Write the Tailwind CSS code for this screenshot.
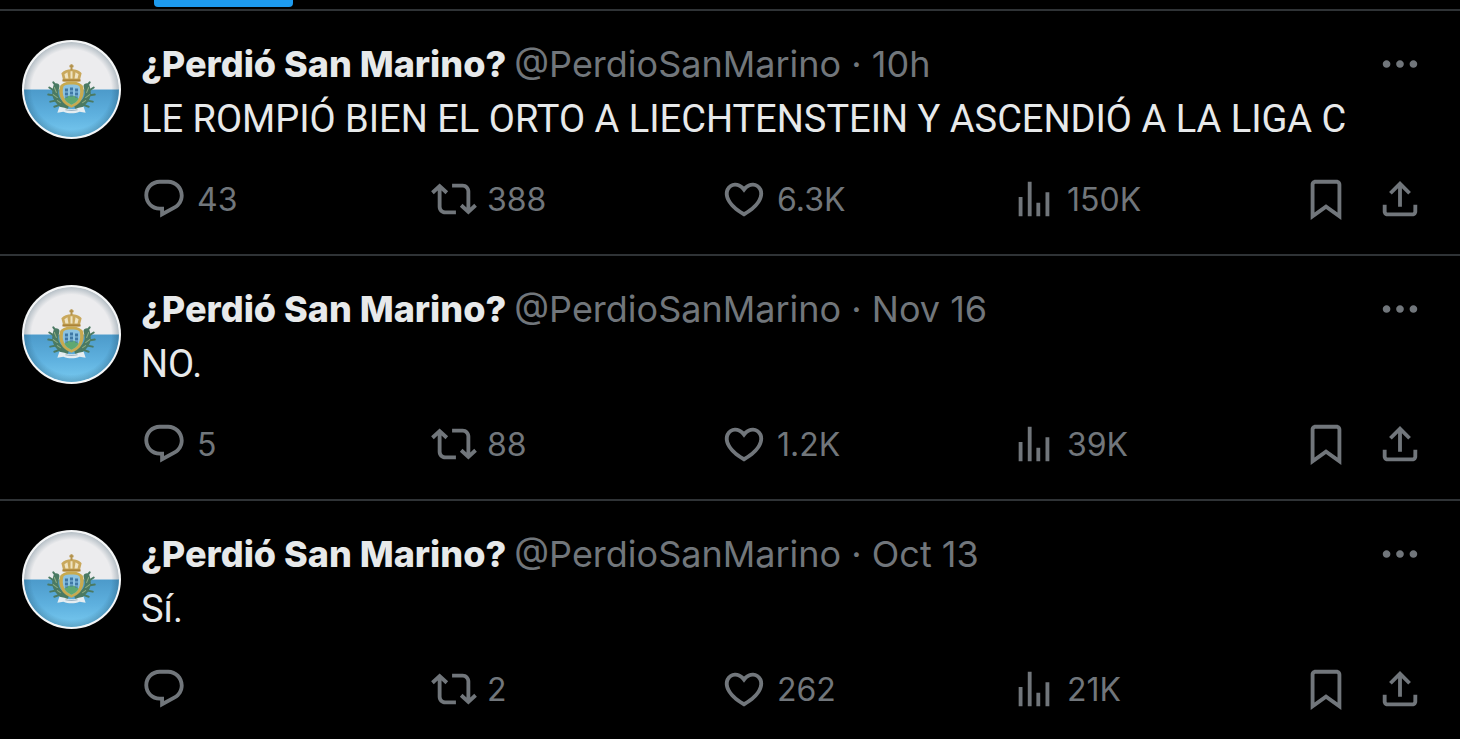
<!DOCTYPE html>
<html lang="es">
<head>
    <meta charset="UTF-8">
    <meta name="viewport" content="width=device-width, initial-scale=1.0">
    <title>¿Perdió San Marino?</title>
    <script src="https://cdn.jsdelivr.net/npm/@tailwindcss/browser@4"></script>
</head>
<body class="min-h-screen overflow-x-hidden bg-black font-[Inter,Roboto,sans-serif] text-[#e7e9ea]">
    <!-- Shared icons -->
    <svg class="hidden" aria-hidden="true">
        <symbol id="reply" viewBox="0 0 24 24"><path d="M1.751 10c0-4.42 3.584-8 8.005-8h4.366c4.49 0 8.129 3.64 8.129 8.13 0 2.96-1.607 5.68-4.196 7.11l-8.054 4.46v-3.69h-.067c-4.49.1-8.183-3.51-8.183-8.01zm8.005-6c-3.317 0-6.005 2.69-6.005 6 0 3.37 2.77 6.08 6.138 6.01l.351-.01h1.761v2.3l5.087-2.81c1.951-1.08 3.163-3.13 3.163-5.36 0-3.39-2.744-6.13-6.129-6.13H9.756z"/></symbol>
        <symbol id="repost" viewBox="0 0 24 24"><path d="M4.5 3.88l4.432 4.14-1.364 1.46L5.5 7.55V16c0 1.1.896 2 2 2H13v2H7.5c-2.209 0-4-1.79-4-4V7.55L1.432 9.48.068 8.02 4.5 3.88zM16.5 6H11V4h5.5c2.209 0 4 1.79 4 4v8.45l2.068-1.93 1.364 1.46-4.432 4.14-4.432-4.14 1.364-1.46 2.068 1.93V8c0-1.1-.896-2-2-2z"/></symbol>
        <symbol id="like" viewBox="0 0 24 24"><path d="M16.697 5.5c-1.222-.06-2.679.51-3.89 2.16l-.805 1.09-.806-1.09C9.984 6.01 8.526 5.44 7.304 5.5c-1.243.07-2.349.78-2.91 1.91-.552 1.12-.633 2.78.479 4.82 1.074 1.97 3.257 4.27 7.129 6.61 3.87-2.34 6.052-4.64 7.126-6.61 1.111-2.04 1.03-3.7.477-4.82-.561-1.13-1.666-1.84-2.908-1.91zm4.187 7.69c-1.351 2.48-4.001 5.12-8.379 7.67l-.503.3-.504-.3c-4.379-2.55-7.029-5.19-8.382-7.67-1.36-2.5-1.41-4.86-.514-6.67.887-1.79 2.647-2.91 4.601-3.01 1.651-.09 3.368.56 4.798 2.01 1.429-1.45 3.146-2.1 4.796-2.01 1.954.1 3.714 1.22 4.601 3.01.896 1.81.846 4.17-.514 6.67z"/></symbol>
        <symbol id="views" viewBox="0 0 24 24"><path d="M8.75 21V3h2v18h-2zM18 21V8.5h2V21h-2zM4 21l.004-10h2L6 21H4zm9.248 0v-7h2v7h-2z"/></symbol>
        <symbol id="bookmark" viewBox="0 0 24 24"><path d="M4 4.5C4 3.12 5.119 2 6.5 2h11C18.881 2 20 3.12 20 4.5v18.44l-8-5.71-8 5.71V4.5zM6.5 4c-.276 0-.5.22-.5.5v14.56l6-4.29 6 4.29V4.5c0-.28-.224-.5-.5-.5h-11z"/></symbol>
        <symbol id="share" viewBox="0 0 24 24"><path d="M12 2.59l5.7 5.7-1.41 1.42L13 6.41V16h-2V6.41l-3.3 3.3-1.41-1.42L12 2.59zM21 15l-.02 3.51c0 1.38-1.12 2.49-2.5 2.49H5.5C4.11 21 3 19.88 3 18.5V15h2v3.5c0 .28.22.5.5.5h12.98c.28 0 .5-.22.5-.5L19 15h2z"/></symbol>
        <symbol id="more" viewBox="0 0 24 24"><path d="M3 12c0-1.1.9-2 2-2s2 .9 2 2-.9 2-2 2-2-.9-2-2zm9 2c1.1 0 2-.9 2-2s-.9-2-2-2-2 .9-2 2 .9 2 2 2zm7 0c1.1 0 2-.9 2-2s-.9-2-2-2-2 .9-2 2 .9 2 2 2z"/></symbol>
    </svg>
    <!-- Avatar: San Marino flag badge. The gradients need a rendered svg, so it is not display:none -->
    <svg class="absolute size-0" aria-hidden="true">
        <defs>
            <linearGradient id="sky" x1="0" y1="0" x2="0" y2="1">
                <stop offset="0" stop-color="#4c9aca"/>
                <stop offset="0.5" stop-color="#5eb0de"/>
                <stop offset="1" stop-color="#7accf2"/>
            </linearGradient>
            <radialGradient id="shade" cx="0.5" cy="0.5" r="0.5">
                <stop offset="0.84" stop-color="#10364c" stop-opacity="0"/>
                <stop offset="1" stop-color="#10364c" stop-opacity="0.25"/>
            </radialGradient>
            <clipPath id="disc"><circle cx="49" cy="49" r="47"/></clipPath>
        </defs>
        <symbol id="avatar" viewBox="0 0 98 98">
            <circle cx="49" cy="49" r="49" fill="#f4f6f7"/>
            <g clip-path="url(#disc)">
                <rect width="98" height="49" fill="#ececee"/>
                <rect y="49" width="98" height="49" fill="url(#sky)"/>
                <circle cx="49" cy="49" r="47" fill="url(#shade)"/>
            </g>
            <!-- laurel and oak branches -->
            <g fill="none" stroke="#4b7a63" stroke-linecap="round">
                <path d="M34 46c-3 9 0 15 9 20M64 46c3 9 0 15-9 20" stroke-width="6"/>
                <path d="M34 46l-3-4M33 51l-6-4M32 55l-6-1M34 60l-6 1M38 64l-6 2M64 46l3-4M65 51l6-4M66 55l6-1M64 60l6 1M60 64l6 2" stroke-width="2"/>
                <path d="M32 47l2 5M31 54l4 3M35 60l3 2M66 47l-2 5M67 54l-4 3M63 60l-3 2" stroke="#8fae83" stroke-width="1"/>
            </g>
            <!-- crown -->
            <path d="M41 41l-2-8c2-3 6-4 10-4s8 1 10 4l-2 8z" fill="#c9a85c"/>
            <path d="M43 38l-1-4 3-2 1 6zM48 38v-7h2v7zM55 38l1-4-3-2-1 6z" fill="#efe3c0"/>
            <path d="M49 24v6M47 26h4" stroke="#b4934c" stroke-width="2"/>
            <path d="M40 40h18" stroke="#ab8337" stroke-width="2"/>
            <!-- shield with the three towers -->
            <path d="M49 41c5 0 8 1 11 4 2 5 1 10-1 14-2 4-5 6-10 8-5-2-8-4-10-8-2-4-3-9-1-14 3-3 6-4 11-4z" fill="#c8aa50"/>
            <path d="M49 44c3 0 6 0 8 2 1 4 1 8-1 12-1 3-4 5-7 6-3-1-6-3-7-6-2-4-2-8-1-12 2-2 5-2 8-2z" fill="#8cc3e2"/>
            <path d="M42 58c2-2 4-3 7-3s5 1 7 3c-1 3-4 5-7 6-3-1-6-3-7-6z" fill="#5fa872"/>
            <path d="M44 48v9M49 47v9M54 48v9" stroke="#3f78a6" stroke-width="3" stroke-dasharray="3 1"/>
            <!-- ribbon -->
            <path d="M37 66l5 1c5 2 9 2 14 0l5-1 2 6-6-1c-5 2-11 2-16 0l-6 1z" fill="#e5edf1"/>
            <path d="M43 69c4 1 8 1 12 0" fill="none" stroke="#9db5c4" stroke-width="1"/>
        </symbol>
    </svg>

    <!-- Bottom edge of the selected tab -->
    <div class="flex h-[9px] pl-[154px]">
        <div class="h-[7px] w-[139px] rounded-b-sm bg-[#1d9bf0]"></div>
    </div>

    <main>
        <article class="flex gap-5 border-t-2 border-[#2f3336] pt-[29px] pr-[37px] pb-8 pl-[22px]">
            <svg class="size-[99px] shrink-0" role="img" aria-label="Bandera de San Marino"><use href="#avatar"/></svg>
            <div class="min-w-0 flex-1">
                <div class="flex h-12 items-center gap-2 text-4xl whitespace-nowrap">
                    <a href="#" class="font-extrabold">¿Perdió San Marino?</a>
                    <span class="text-[#71767b]"><a href="#">@PerdioSanMarino</a> · <a href="#">10h</a></span>
                    <button type="button" aria-label="Más opciones" class="ml-auto text-[#71767b]"><svg class="size-[46px] fill-current"><use href="#more"/></svg></button>
                </div>
                <p class="mt-[7px] font-[Roboto,sans-serif] text-[38px] leading-[49px]">LE ROMPIÓ BIEN EL ORTO A LIECHTENSTEIN Y ASCENDIÓ A LA LIGA C</p>
                <div class="mt-8 flex items-center text-[32px] leading-[44px] text-[#71767b]">
                    <div class="flex-1"><button type="button" aria-label="Responder" class="flex items-center gap-[10px]"><svg class="size-[46px] fill-current"><use href="#reply"/></svg><span class="pt-0.5">43</span></button></div>
                    <div class="flex-1"><button type="button" aria-label="Repostear" class="flex items-center gap-[10px]"><svg class="size-[46px] fill-current"><use href="#repost"/></svg><span class="pt-0.5">388</span></button></div>
                    <div class="flex-1"><button type="button" aria-label="Me gusta" class="flex items-center gap-[10px]"><svg class="size-[46px] fill-current"><use href="#like"/></svg><span class="pt-0.5">6.3K</span></button></div>
                    <div class="flex-1"><a href="#" aria-label="Ver estadísticas" class="flex items-center gap-[10px]"><svg class="size-[46px] fill-current"><use href="#views"/></svg><span class="pt-0.5">150K</span></a></div>
                    <div class="flex gap-7 pl-0.5">
                        <button type="button" aria-label="Guardar"><svg class="size-[46px] fill-current"><use href="#bookmark"/></svg></button>
                        <button type="button" aria-label="Compartir"><svg class="size-[46px] fill-current"><use href="#share"/></svg></button>
                    </div>
                </div>
            </div>
        </article>

        <article class="flex gap-5 border-t-2 border-[#2f3336] pt-[29px] pr-[37px] pb-8 pl-[22px]">
            <svg class="size-[99px] shrink-0" role="img" aria-label="Bandera de San Marino"><use href="#avatar"/></svg>
            <div class="min-w-0 flex-1">
                <div class="flex h-12 items-center gap-2 text-4xl whitespace-nowrap">
                    <a href="#" class="font-extrabold">¿Perdió San Marino?</a>
                    <span class="text-[#71767b]"><a href="#">@PerdioSanMarino</a> · <a href="#">Nov 16</a></span>
                    <button type="button" aria-label="Más opciones" class="ml-auto text-[#71767b]"><svg class="size-[46px] fill-current"><use href="#more"/></svg></button>
                </div>
                <p class="mt-[7px] font-[Roboto,sans-serif] text-[38px] leading-[49px]">NO.</p>
                <div class="mt-8 flex items-center text-[32px] leading-[44px] text-[#71767b]">
                    <div class="flex-1"><button type="button" aria-label="Responder" class="flex items-center gap-[10px]"><svg class="size-[46px] fill-current"><use href="#reply"/></svg><span class="pt-0.5">5</span></button></div>
                    <div class="flex-1"><button type="button" aria-label="Repostear" class="flex items-center gap-[10px]"><svg class="size-[46px] fill-current"><use href="#repost"/></svg><span class="pt-0.5">88</span></button></div>
                    <div class="flex-1"><button type="button" aria-label="Me gusta" class="flex items-center gap-[10px]"><svg class="size-[46px] fill-current"><use href="#like"/></svg><span class="pt-0.5">1.2K</span></button></div>
                    <div class="flex-1"><a href="#" aria-label="Ver estadísticas" class="flex items-center gap-[10px]"><svg class="size-[46px] fill-current"><use href="#views"/></svg><span class="pt-0.5">39K</span></a></div>
                    <div class="flex gap-7 pl-0.5">
                        <button type="button" aria-label="Guardar"><svg class="size-[46px] fill-current"><use href="#bookmark"/></svg></button>
                        <button type="button" aria-label="Compartir"><svg class="size-[46px] fill-current"><use href="#share"/></svg></button>
                    </div>
                </div>
            </div>
        </article>

        <article class="flex gap-5 border-t-2 border-[#2f3336] pt-[29px] pr-[37px] pl-[22px]">
            <svg class="size-[99px] shrink-0" role="img" aria-label="Bandera de San Marino"><use href="#avatar"/></svg>
            <div class="min-w-0 flex-1">
                <div class="flex h-12 items-center gap-2 text-4xl whitespace-nowrap">
                    <a href="#" class="font-extrabold">¿Perdió San Marino?</a>
                    <span class="text-[#71767b]"><a href="#">@PerdioSanMarino</a> · <a href="#">Oct 13</a></span>
                    <button type="button" aria-label="Más opciones" class="ml-auto text-[#71767b]"><svg class="size-[46px] fill-current"><use href="#more"/></svg></button>
                </div>
                <p class="mt-[7px] font-[Roboto,sans-serif] text-[38px] leading-[49px]">Sí.</p>
                <div class="mt-8 flex items-center text-[32px] leading-[44px] text-[#71767b]">
                    <div class="flex-1"><button type="button" aria-label="Responder" class="flex items-center gap-[10px]"><svg class="size-[46px] fill-current"><use href="#reply"/></svg></button></div>
                    <div class="flex-1"><button type="button" aria-label="Repostear" class="flex items-center gap-[10px]"><svg class="size-[46px] fill-current"><use href="#repost"/></svg><span class="pt-0.5">2</span></button></div>
                    <div class="flex-1"><button type="button" aria-label="Me gusta" class="flex items-center gap-[10px]"><svg class="size-[46px] fill-current"><use href="#like"/></svg><span class="pt-0.5">262</span></button></div>
                    <div class="flex-1"><a href="#" aria-label="Ver estadísticas" class="flex items-center gap-[10px]"><svg class="size-[46px] fill-current"><use href="#views"/></svg><span class="pt-0.5">21K</span></a></div>
                    <div class="flex gap-7 pl-0.5">
                        <button type="button" aria-label="Guardar"><svg class="size-[46px] fill-current"><use href="#bookmark"/></svg></button>
                        <button type="button" aria-label="Compartir"><svg class="size-[46px] fill-current"><use href="#share"/></svg></button>
                    </div>
                </div>
            </div>
        </article>
    </main>
</body>
</html>
